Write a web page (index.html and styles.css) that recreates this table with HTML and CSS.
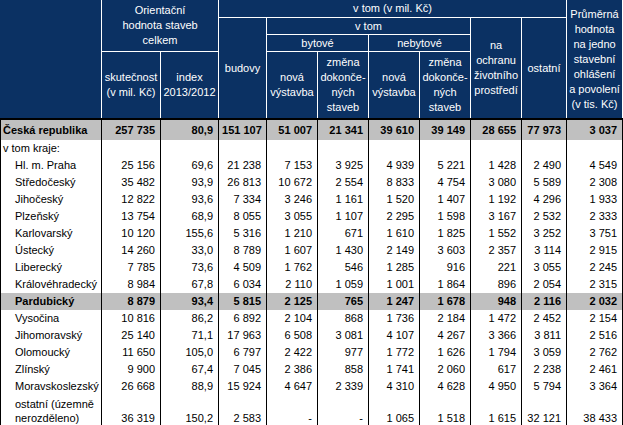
FILE: index.html
```html
<!DOCTYPE html>
<html lang="cs">
<head>
<meta charset="utf-8">
<title>Orientační hodnota staveb</title>
<link rel="stylesheet" href="styles.css">
</head>
<body>
<table class="tab">
<colgroup>
<col class="c-name"><col class="c-sk"><col class="c-idx"><col class="c-bud">
<col class="c-n"><col class="c-n"><col class="c-n"><col class="c-n"><col class="c-n">
<col class="c-ost"><col class="c-avg">
</colgroup>
<thead>
<tr class="ha">
<th rowspan="4" class="corner"></th>
<th colspan="2" rowspan="3" class="hb">Orientační<br>hodnota staveb<br>celkem</th>
<th colspan="7" class="hb">v tom (v mil. Kč)</th>
<th rowspan="4">Průměrná<br>hodnota<br>na jedno<br>stavební<br>ohlášení<br>a povolení<br>(v tis. Kč)</th>
</tr>
<tr class="hbrow">
<th rowspan="3">budovy</th>
<th colspan="4" class="hb">v tom</th>
<th rowspan="3">na<br>ochranu<br>životního<br>prostředí</th>
<th rowspan="3">ostatní</th>
</tr>
<tr class="hcrow">
<th colspan="2" class="hb">bytové</th>
<th colspan="2" class="hb">nebytové</th>
</tr>
<tr class="hdrow">
<th>skutečnost<br>(v mil. Kč)</th>
<th>index<br>2013/2012</th>
<th>nová<br>výstavba</th>
<th>změna<br>dokonče-<br>ných<br>staveb</th>
<th>nová<br>výstavba</th>
<th>změna<br>dokonče-<br>ných<br>staveb</th>
</tr>
</thead>
<tbody>
<tr class="total">
<td class="lbl">Česká republika</td><td>257 735</td><td>80,9</td><td>151 107</td><td>51 007</td><td>21 341</td><td>39 610</td><td>39 149</td><td>28 655</td><td>77 973</td><td>3 037</td>
</tr>
<tr>
<td class="lbl">v tom kraje:</td><td></td><td></td><td></td><td></td><td></td><td></td><td></td><td></td><td></td><td></td>
</tr>
<tr>
<td class="lbl sub">Hl. m. Praha</td><td>25 156</td><td>69,6</td><td>21 238</td><td>7 153</td><td>3 925</td><td>4 939</td><td>5 221</td><td>1 428</td><td>2 490</td><td>4 549</td>
</tr>
<tr>
<td class="lbl sub">Středočeský</td><td>35 482</td><td>93,9</td><td>26 813</td><td>10 672</td><td>2 554</td><td>8 833</td><td>4 754</td><td>3 080</td><td>5 589</td><td>2 308</td>
</tr>
<tr>
<td class="lbl sub">Jihočeský</td><td>12 822</td><td>93,6</td><td>7 334</td><td>3 246</td><td>1 161</td><td>1 520</td><td>1 407</td><td>1 192</td><td>4 296</td><td>1 933</td>
</tr>
<tr>
<td class="lbl sub">Plzeňský</td><td>13 754</td><td>68,9</td><td>8 055</td><td>3 055</td><td>1 107</td><td>2 295</td><td>1 598</td><td>3 167</td><td>2 532</td><td>2 333</td>
</tr>
<tr>
<td class="lbl sub">Karlovarský</td><td>10 120</td><td>155,6</td><td>5 316</td><td>1 210</td><td>671</td><td>1 610</td><td>1 825</td><td>1 552</td><td>3 252</td><td>3 751</td>
</tr>
<tr>
<td class="lbl sub">Ústecký</td><td>14 260</td><td>33,0</td><td>8 789</td><td>1 607</td><td>1 430</td><td>2 149</td><td>3 603</td><td>2 357</td><td>3 114</td><td>2 915</td>
</tr>
<tr>
<td class="lbl sub">Liberecký</td><td>7 785</td><td>73,6</td><td>4 509</td><td>1 762</td><td>546</td><td>1 285</td><td>916</td><td>221</td><td>3 055</td><td>2 245</td>
</tr>
<tr>
<td class="lbl sub">Královéhradecký</td><td>8 984</td><td>67,8</td><td>6 034</td><td>2 110</td><td>1 059</td><td>1 001</td><td>1 864</td><td>896</td><td>2 054</td><td>2 315</td>
</tr>
<tr class="hl">
<td class="lbl sub">Pardubický</td><td>8 879</td><td>93,4</td><td>5 815</td><td>2 125</td><td>765</td><td>1 247</td><td>1 678</td><td>948</td><td>2 116</td><td>2 032</td>
</tr>
<tr>
<td class="lbl sub">Vysočina</td><td>10 816</td><td>86,2</td><td>6 892</td><td>2 104</td><td>868</td><td>1 736</td><td>2 184</td><td>1 472</td><td>2 452</td><td>2 154</td>
</tr>
<tr>
<td class="lbl sub">Jihomoravský</td><td>25 140</td><td>71,1</td><td>17 963</td><td>6 508</td><td>3 081</td><td>4 107</td><td>4 267</td><td>3 366</td><td>3 811</td><td>2 516</td>
</tr>
<tr>
<td class="lbl sub">Olomoucký</td><td>11 650</td><td>105,0</td><td>6 797</td><td>2 422</td><td>977</td><td>1 772</td><td>1 626</td><td>1 794</td><td>3 059</td><td>2 762</td>
</tr>
<tr>
<td class="lbl sub">Zlínský</td><td>9 900</td><td>67,4</td><td>7 045</td><td>2 386</td><td>858</td><td>1 741</td><td>2 060</td><td>617</td><td>2 238</td><td>2 461</td>
</tr>
<tr>
<td class="lbl sub">Moravskoslezský</td><td>26 668</td><td>88,9</td><td>15 924</td><td>4 647</td><td>2 339</td><td>4 310</td><td>4 628</td><td>4 950</td><td>5 794</td><td>3 364</td>
</tr>
<tr class="last">
<td class="lbl sub">ostatní (územně<br>nerozděleno)</td><td>36 319</td><td>150,2</td><td>2 583</td><td>-</td><td>-</td><td>1 065</td><td>1 518</td><td>1 615</td><td>32 121</td><td>38 433</td>
</tr>
</tbody>
</table>
</body>
</html>
```

FILE: styles.css
```css
html, body {
  margin: 0;
  padding: 0;
  background: #ffffff;
}

.tab {
  width: 623px;
  table-layout: fixed;
  border-collapse: separate;
  border-spacing: 0;
  font-family: "Liberation Sans", Arial, sans-serif;
  font-size: 11px;
  color: #000;
}

.c-name { width: 102px; }
.c-sk { width: 59px; }
.c-idx { width: 58px; }
.c-bud { width: 48px; }
.c-n { width: 51px; }
.c-ost { width: 45px; }
.c-avg { width: 56px; }

.tab th {
  background: #0b3163;
  color: #ffffff;
  font-weight: normal;
  line-height: 15px;
  padding: 0;
  text-align: center;
  vertical-align: middle;
  border-right: 1px solid #ffffff;
  white-space: nowrap;
}

.tab th.hb {
  border-bottom: 1px solid #ffffff;
}

.tab th.corner {
  border-left: 1px solid #0b3163;
}

.ha { height: 18px; }
.hbrow { height: 17px; }
.hcrow { height: 17px; }
.hdrow { height: 66px; }

.tab td {
  height: 17px;
  padding: 0 5px 0 3px;
  line-height: 15px;
  text-align: right;
  vertical-align: middle;
  white-space: nowrap;
  border-right: 1px solid #000;
}

.tab td.lbl {
  text-align: left;
  border-left: 1px solid #000;
  padding-left: 2px;
}

.tab td.sub {
  padding-left: 14px;
}

.total td {
  height: 20px;
  background: #c0c0c0;
  font-weight: bold;
  border-top: 2px solid #000;
}

.hl td {
  background: #c0c0c0;
  font-weight: bold;
}

.last td {
  height: 29px;
  line-height: 14px;
  vertical-align: bottom;
  padding-top: 1px;
  border-bottom: 1px solid #000;
}
```
